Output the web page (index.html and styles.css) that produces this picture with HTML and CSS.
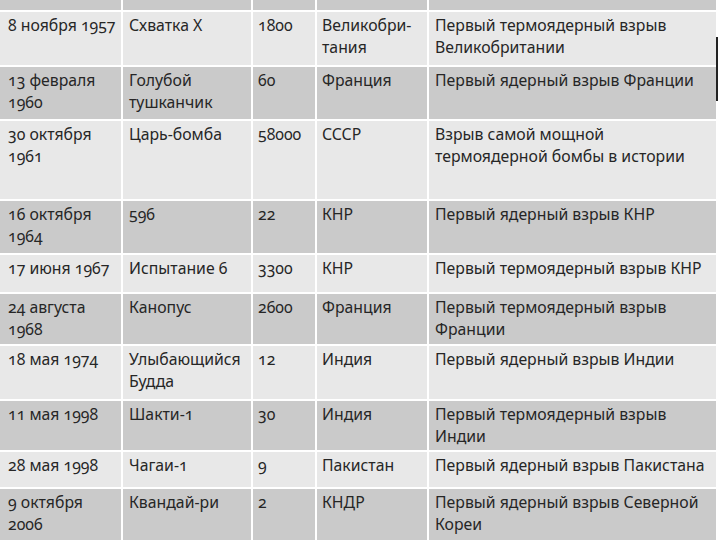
FILE: index.html
```html
<!DOCTYPE html>
<html lang="ru">
<head>
<meta charset="utf-8">
<link rel="stylesheet" href="styles.css">
</head>
<body>
<table class="tests">
  <colgroup>
    <col class="c-date"><col class="c-name"><col class="c-power"><col class="c-country"><col class="c-note">
  </colgroup>
  <tr class="head"><th></th><th></th><th></th><th></th><th></th></tr>
  <tr><td>8 ноября 1957</td><td>Схватка X</td><td>1800</td><td>Великобри-<br>тания</td><td>Первый термоядерный взрыв Великобритании</td></tr>
  <tr><td>13 февраля 1960</td><td>Голубой тушканчик</td><td>60</td><td>Франция</td><td>Первый ядерный взрыв Франции</td></tr>
  <tr><td>30 октября 1961</td><td>Царь-бомба</td><td>58000</td><td>СССР</td><td>Взрыв самой мощной термоядерной бомбы в истории</td></tr>
  <tr><td>16 октября 1964</td><td>596</td><td>22</td><td>КНР</td><td>Первый ядерный взрыв КНР</td></tr>
  <tr><td>17 июня 1967</td><td>Испытание 6</td><td>3300</td><td>КНР</td><td>Первый термоядерный взрыв КНР</td></tr>
  <tr><td>24 августа 1968</td><td>Канопус</td><td>2600</td><td>Франция</td><td>Первый термоядерный взрыв Франции</td></tr>
  <tr><td>18 мая 1974</td><td>Улыбающийся Будда</td><td>12</td><td>Индия</td><td>Первый ядерный взрыв Индии</td></tr>
  <tr><td>11 мая 1998</td><td>Шакти-1</td><td>30</td><td>Индия</td><td>Первый термоядерный взрыв Индии</td></tr>
  <tr><td>28 мая 1998</td><td>Чагаи-1</td><td>9</td><td>Пакистан</td><td>Первый ядерный взрыв Пакистана</td></tr>
  <tr><td>9 октября 2006</td><td>Квандай-ри</td><td>2</td><td>КНДР</td><td>Первый ядерный взрыв Северной Кореи</td></tr>
</table>
<div class="edge-mark"></div>
</body>
</html>
```
FILE: styles.css
```css
html, body {
  margin: 0;
  padding: 0;
  background: #ffffff;
  overflow: hidden;
}
body {
  width: 720px;
  height: 540px;
  position: relative;
}
.tests {
  table-layout: fixed;
  border-collapse: separate;
  border-spacing: 2px;
  margin: -2px 0 0 -2px;
  width: 720px;
  background: #ffffff;
  font-family: "Noto Sans", "Lato", sans-serif;
  font-variant-numeric: oldstyle-nums;
  font-size: 15.8px;
  line-height: 22px;
  color: #262626;
}
.c-date { width: 121px; }
.c-name { width: 128px; }
.c-power { width: 62px; }
.c-country { width: 110px; }
.c-note { width: 287px; }
.tests td, .tests th {
  box-sizing: border-box;
  vertical-align: top;
  text-align: left;
  padding: 2px 3px 0 6px;
  font-weight: normal;
}
.tests td:nth-child(3), .tests td:nth-child(4) { padding-left: 5px; }
.tests td:nth-child(1) { padding-left: 8px; }
.head th { background: #c9c9c9; height: 10px; padding: 0; }
.tests tr:nth-child(even) td { background: #e8e8e8; }
.tests tr:nth-child(odd) td { background: #cacaca; }
.tests tr:nth-child(2) td { height: 53px; }
.tests tr:nth-child(3) td { height: 52px; }
.tests tr:nth-child(4) td { height: 78px; }
.tests tr:nth-child(5) td { height: 52px; }
.tests tr:nth-child(6) td { height: 37px; }
.tests tr:nth-child(7) td { height: 50px; }
.tests tr:nth-child(8) td { height: 53px; }
.tests tr:nth-child(9) td { height: 49px; }
.tests tr:nth-child(10) td { height: 35px; }
.tests tr:nth-child(11) td { height: 60px; }
.edge-mark {
  position: absolute;
  left: 716px;
  top: 37px;
  width: 2px;
  height: 64px;
  background: #222222;
}
```
